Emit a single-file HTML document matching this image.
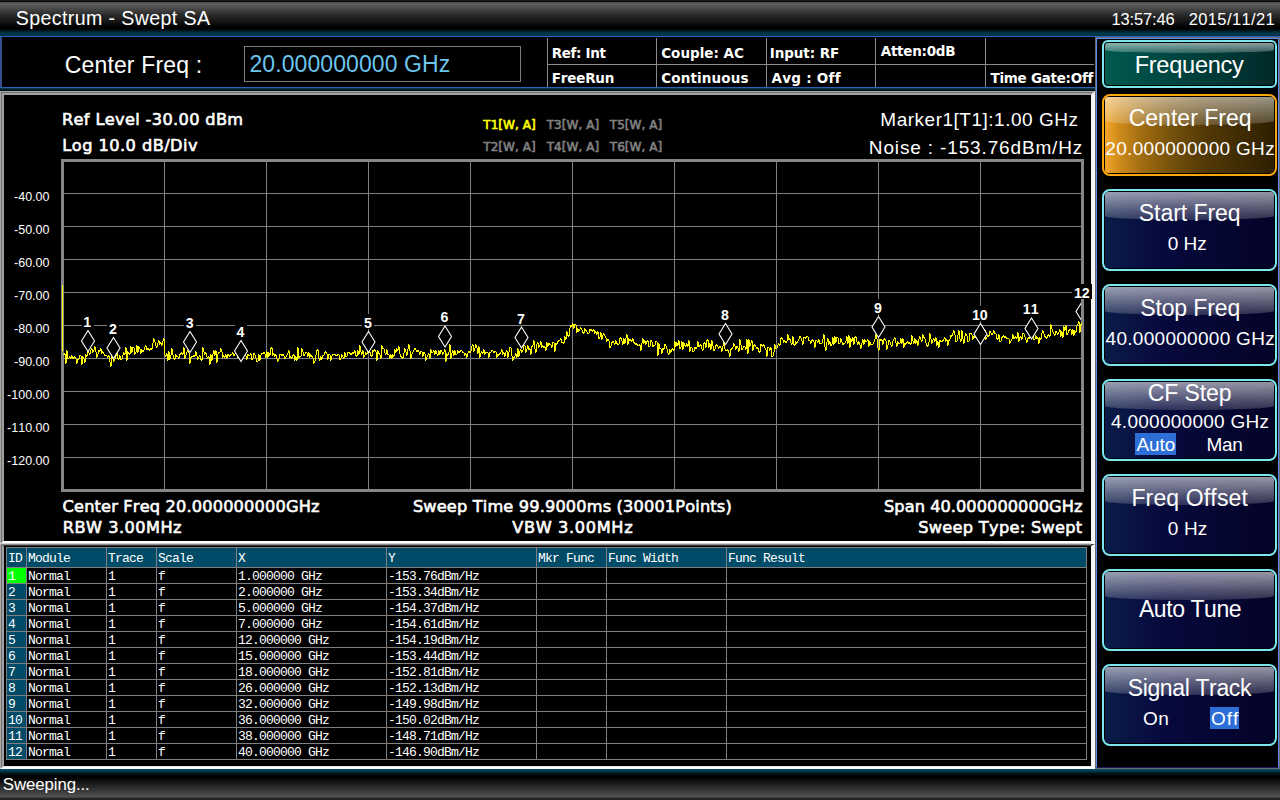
<!DOCTYPE html>
<html lang="en"><head><meta charset="utf-8"><title>Spectrum - Swept SA</title>
<style>
html,body{margin:0;padding:0;background:#000;}
body{width:1280px;height:800px;position:relative;overflow:hidden;font-family:"Liberation Sans",sans-serif;color:#fff;}
.abs,.t{position:absolute;}
.t{white-space:pre;line-height:0;font-weight:400;font-kerning:none;font-variant-ligatures:none;color:#fff;}
.fls,.flsb{font-family:"Liberation Sans",sans-serif;}
.fdv,.fdvb,.fsb{font-family:"DejaVu Sans",sans-serif;}
.flsb,.fdvb{font-weight:700;}
#titlebar{left:0;top:0;width:1280px;height:36px;background:linear-gradient(#1c1c1c 0,#1c1c1c 1px,#080808 1px,#080808 2px,#484848 2px,#606060 4px,#424242 10px,#2a2a2a 15px,#1a1a1a 20px,#080808 25px,#000 28px,#000 29px,#002a38 32px,#003c4e 34px,#003242 36px);}
#topline{left:0;top:36px;width:1280px;height:1px;background:#2f62c0;}
#info{left:0;top:37px;width:1095px;height:50px;background:#000;border-left:2px solid #34508f;box-sizing:border-box;}
#infoline{left:0;top:87px;width:1095px;height:1px;background:#2a62b8;}
#infoglow{left:0;top:88px;width:1095px;height:3px;background:linear-gradient(#0a3c4e,#04202a 60%,#000);}
#freqbox{left:244px;top:46px;width:277px;height:36px;box-sizing:border-box;border:1px solid #7d7d7d;background:#000;}
.gl{position:absolute;background:#8a8a8a;}
.panel{position:absolute;box-sizing:border-box;background:#000;border-style:solid;border-color:#a0a0a0 #f6f6f6 #fff #a0a0a0;}
.panel i{position:absolute;display:block;}
#side{left:1095px;top:37px;width:185px;height:732px;background:#000;box-sizing:border-box;border:1px solid #6a6a6a;}
#side:before{content:"";position:absolute;left:0;top:0;right:0;bottom:0;border:1px solid #5a8cf2;border-bottom-color:#1a1a58;}
.btn{position:absolute;left:1102px;width:175px;box-sizing:border-box;border:2px solid #7ae6ee;border-radius:8px;background:#000;padding:0;}
.btn .fill{position:absolute;left:1px;top:1px;right:1px;bottom:1px;border-radius:3px;background:linear-gradient(90deg,#0a1c48 0,#06093c 35%,#040328 100%);}
.btn .gloss{position:absolute;left:1px;top:1px;right:1px;height:28px;border-radius:3px 3px 50% 50%/3px 3px 4px 4px;background:linear-gradient(rgba(255,255,255,.58),rgba(255,255,255,.16));}
.btn.teal{border-radius:6px;}
.btn.teal .fill{background:linear-gradient(90deg,#005a4e 0,#004a44 30%,#002a2a 100%);}
.btn.teal .gloss{height:10px;border-radius:3px 3px 50% 50%/3px 3px 3px 3px;background:linear-gradient(rgba(255,255,255,.55),rgba(255,255,255,.2));}
.btn.org{border-color:#fba60c;}
.btn.org .fill{background:linear-gradient(90deg,#f4a628 0,#d08c1c 8%,#a06c10 22%,#74500a 40%,#523806 60%,#2e2000 100%);}
.btn.org .gloss{background:linear-gradient(rgba(255,255,255,.52),rgba(255,255,255,.16));}
.hl{position:absolute;background:#2d6fd6;}
#status{left:0;top:769px;width:1280px;height:31px;background:linear-gradient(#00506c 0,#003a4e 2px,#001a24 4px,#000 7px,#000 8px,#525252 28px,#2a2a2a 29px,#1c1c1c 31px);}
table{border-collapse:collapse;position:absolute;left:6px;top:547px;table-layout:fixed;}
td,th{border:1px solid #808080;padding:2px 0 0 1px;height:13px;font:400 13px/13px "Liberation Mono",monospace;letter-spacing:-0.8px;color:#fff;text-align:left;white-space:pre;overflow:hidden;background:#000;}
th{height:17px;line-height:17px;background:#004b68;}
td.id{background:#004b68;}
td.sel{background:#00ff00;}
</style></head><body>

<div id="titlebar" class="abs"></div><div id="topline" class="abs"></div>
<span class="t fls" style="left:15.71px;top:18.30px;font-size:19.6px;letter-spacing:0.387px;">Spectrum - Swept SA</span>
<span class="t fls" style="left:1111.44px;top:19.30px;font-size:16.5px;letter-spacing:-0.149px;">13:57:46</span>
<span class="t fls" style="left:1188.67px;top:19.30px;font-size:16.5px;letter-spacing:0.395px;">2015/11/21</span>
<div id="info" class="abs"></div><div id="infoline" class="abs"></div><div id="infoglow" class="abs"></div>
<span class="t fls" style="left:64.73px;top:65.30px;font-size:23px;letter-spacing:0.156px;">Center Freq :</span>
<div id="freqbox" class="abs"></div>
<span class="t fls" style="left:249.44px;top:64.30px;font-size:23px;color:#6cc6ee;letter-spacing:0.088px;">20.000000000 GHz</span>
<div class="gl" style="left:547px;top:38px;width:1px;height:49px"></div>
<div class="gl" style="left:656px;top:38px;width:1px;height:49px"></div>
<div class="gl" style="left:766px;top:38px;width:1px;height:49px"></div>
<div class="gl" style="left:875px;top:38px;width:1px;height:49px"></div>
<div class="gl" style="left:985px;top:38px;width:1px;height:49px"></div>
<div class="gl" style="left:547px;top:64px;width:547px;height:1px"></div>
<span class="t fdvb" style="left:551.76px;top:53.30px;font-size:13.5px;letter-spacing:-0.352px;">Ref: Int</span>
<span class="t fdvb" style="left:551.76px;top:78.30px;font-size:13.5px;letter-spacing:-0.202px;">FreeRun</span>
<span class="t fdvb" style="left:661.23px;top:53.30px;font-size:13.5px;letter-spacing:-0.006px;">Couple: AC</span>
<span class="t fdvb" style="left:661.23px;top:78.30px;font-size:13.5px;letter-spacing:0.133px;">Continuous</span>
<span class="t fdvb" style="left:769.66px;top:53.30px;font-size:13.5px;letter-spacing:-0.051px;">Input: RF</span>
<span class="t fdvb" style="left:771.43px;top:78.30px;font-size:13.5px;letter-spacing:0.277px;">Avg : Off</span>
<span class="t fdvb" style="left:880.73px;top:51.30px;font-size:13.5px;letter-spacing:-0.269px;">Atten:0dB</span>
<span class="t fdvb" style="left:990.53px;top:78.30px;font-size:13.5px;letter-spacing:-0.278px;">Time Gate:Off</span>
<div class="panel" id="chartpanel" style="left:0;top:91px;width:1095px;height:453px;border-width:4px 4px 3px 4px"><i style="left:-4px;top:-4px;width:1093px;height:1px;background:#a8a8a8"></i><i style="left:-3px;top:-3px;width:1091px;height:1px;background:#707070"></i><i style="left:-4px;top:-4px;width:1px;height:452px;background:#a8a8a8"></i><i style="left:-3px;top:-3px;width:1px;height:450px;background:#707070"></i><i style="left:-4px;bottom:-3px;width:1091px;height:1px;background:#d0d0d0"></i></div>
<div class="panel" id="tablepanel" style="left:0;top:544px;width:1095px;height:225px;border-width:2px 4px 3px 4px;border-top-color:#3a3a3a"><i style="left:-4px;top:-2px;width:1091px;height:1px;background:#8a8a8a"></i><i style="left:-4px;top:-2px;width:1px;height:224px;background:#a8a8a8"></i><i style="left:-3px;top:-1px;width:1px;height:222px;background:#707070"></i><i style="left:0;bottom:-1px;width:1087px;height:1px;background:#e8e8e8"></i></div>
<svg class="abs" style="left:0;top:0" width="1095" height="545" viewBox="0 0 1095 545" shape-rendering="crispEdges"><defs><clipPath id="plotclip"><rect x="64" y="162" width="1017" height="327"/></clipPath></defs><rect x="62.5" y="160.5" width="1020" height="330" fill="none" stroke="#868686" stroke-width="3"/><line x1="164.5" y1="162" x2="164.5" y2="489" stroke="#808080" stroke-width="1"/><line x1="64" y1="193.5" x2="1081" y2="193.5" stroke="#808080" stroke-width="1"/><line x1="266.5" y1="162" x2="266.5" y2="489" stroke="#808080" stroke-width="1"/><line x1="64" y1="226.5" x2="1081" y2="226.5" stroke="#808080" stroke-width="1"/><line x1="368.5" y1="162" x2="368.5" y2="489" stroke="#808080" stroke-width="1"/><line x1="64" y1="259.5" x2="1081" y2="259.5" stroke="#808080" stroke-width="1"/><line x1="470.5" y1="162" x2="470.5" y2="489" stroke="#808080" stroke-width="1"/><line x1="64" y1="292.5" x2="1081" y2="292.5" stroke="#808080" stroke-width="1"/><line x1="572.5" y1="162" x2="572.5" y2="489" stroke="#808080" stroke-width="1"/><line x1="64" y1="325.5" x2="1081" y2="325.5" stroke="#808080" stroke-width="1"/><line x1="674.5" y1="162" x2="674.5" y2="489" stroke="#808080" stroke-width="1"/><line x1="64" y1="358.5" x2="1081" y2="358.5" stroke="#808080" stroke-width="1"/><line x1="776.5" y1="162" x2="776.5" y2="489" stroke="#808080" stroke-width="1"/><line x1="64" y1="391.5" x2="1081" y2="391.5" stroke="#808080" stroke-width="1"/><line x1="878.5" y1="162" x2="878.5" y2="489" stroke="#808080" stroke-width="1"/><line x1="64" y1="424.5" x2="1081" y2="424.5" stroke="#808080" stroke-width="1"/><line x1="980.5" y1="162" x2="980.5" y2="489" stroke="#808080" stroke-width="1"/><line x1="64" y1="457.5" x2="1081" y2="457.5" stroke="#808080" stroke-width="1"/><path d="M62.5 285v66M63.5 354v1M64.5 353v2M65.5 354v10M66.5 350v13M67.5 351v8M68.5 358v1M69.5 356v2M70.5 357v2M71.5 355v3M72.5 356v3M73.5 357v2M74.5 356v2M75.5 357v2M76.5 359v5M77.5 359v4M78.5 359v1M79.5 355v4M80.5 355v1M81.5 356v9M82.5 356v8M83.5 357v2M84.5 359v4M85.5 354v8M86.5 355v2M87.5 351v5M88.5 351v2M89.5 353v2M90.5 350v4M91.5 348v2M92.5 349v4M93.5 350v2M94.5 346v4M95.5 347v5M96.5 352v6M97.5 354v3M98.5 350v4M99.5 350v2M100.5 348v3M101.5 349v5M102.5 351v2M103.5 352v2M104.5 354v2M105.5 355v1M106.5 355v1M107.5 356v2M108.5 355v2M109.5 356v6M110.5 362v5M111.5 355v11M112.5 356v3M113.5 359v3M114.5 359v2M115.5 356v3M116.5 349v7M117.5 350v9M118.5 358v2M119.5 355v4M120.5 356v4M121.5 359v1M122.5 355v4M123.5 352v3M124.5 353v2M125.5 347v7M126.5 348v13M127.5 351v9M128.5 352v2M129.5 353v2M130.5 346v8M131.5 347v6M132.5 347v5M133.5 347v1M134.5 348v7M135.5 352v2M136.5 345v7M137.5 346v7M138.5 346v6M139.5 347v2M140.5 349v5M141.5 349v4M142.5 350v2M143.5 350v2M144.5 347v3M145.5 345v2M146.5 346v4M147.5 348v2M148.5 348v2M149.5 349v2M150.5 348v2M151.5 348v2M152.5 343v6M153.5 338v5M154.5 339v3M155.5 342v4M156.5 346v2M157.5 343v4M158.5 340v3M159.5 341v4M160.5 342v2M161.5 343v3M162.5 341v4M163.5 338v3M164.5 339v16M165.5 355v2M166.5 353v3M167.5 354v7M168.5 351v9M169.5 352v8M170.5 355v4M171.5 348v7M172.5 349v6M173.5 355v4M174.5 358v2M175.5 354v5M176.5 355v2M177.5 356v1M178.5 357v2M179.5 354v4M180.5 353v2M181.5 352v2M182.5 353v2M183.5 347v7M184.5 348v11M185.5 355v3M186.5 352v3M187.5 350v2M188.5 351v2M189.5 353v11M190.5 357v6M191.5 356v2M192.5 356v1M193.5 355v2M194.5 355v2M195.5 351v5M196.5 352v4M197.5 356v4M198.5 357v2M199.5 355v2M200.5 356v4M201.5 359v2M202.5 347v13M203.5 348v4M204.5 352v3M205.5 352v2M206.5 353v4M207.5 357v2M208.5 356v2M209.5 357v8M210.5 354v10M211.5 355v6M212.5 354v6M213.5 350v4M214.5 351v5M215.5 350v5M216.5 351v12M217.5 354v8M218.5 352v2M219.5 352v1M220.5 348v4M221.5 349v3M222.5 352v6M223.5 355v2M224.5 356v2M225.5 354v3M226.5 355v4M227.5 354v4M228.5 354v2M229.5 355v2M230.5 354v2M231.5 354v1M232.5 352v2M233.5 353v3M234.5 354v2M235.5 352v2M236.5 350v2M237.5 351v7M238.5 354v3M239.5 352v2M240.5 352v2M241.5 354v7M242.5 357v3M243.5 348v9M244.5 349v6M245.5 354v2M246.5 356v4M247.5 354v5M248.5 354v2M249.5 355v1M250.5 353v2M251.5 354v6M252.5 358v2M253.5 353v5M254.5 353v2M255.5 355v3M256.5 358v4M257.5 361v1M258.5 354v7M259.5 355v6M260.5 355v5M261.5 353v2M262.5 353v1M263.5 352v2M264.5 352v2M265.5 354v4M266.5 351v6M267.5 352v6M268.5 352v5M269.5 353v3M270.5 348v7M271.5 347v2M272.5 348v8M273.5 353v2M274.5 354v3M275.5 354v2M276.5 355v4M277.5 359v3M278.5 359v2M279.5 354v5M280.5 354v1M281.5 354v2M282.5 354v2M283.5 354v2M284.5 356v3M285.5 357v2M286.5 355v2M287.5 353v2M288.5 350v3M289.5 351v7M290.5 356v2M291.5 357v2M292.5 355v3M293.5 354v2M294.5 355v6M295.5 356v4M296.5 357v4M297.5 347v13M298.5 348v10M299.5 356v2M300.5 356v1M301.5 348v8M302.5 349v3M303.5 352v4M304.5 354v2M305.5 352v2M306.5 352v1M307.5 353v4M308.5 352v4M309.5 353v5M310.5 354v3M311.5 355v2M312.5 356v2M313.5 358v6M314.5 361v2M315.5 355v6M316.5 350v5M317.5 349v2M318.5 350v8M319.5 358v3M320.5 356v4M321.5 357v3M322.5 355v4M323.5 355v1M324.5 352v3M325.5 351v2M326.5 352v2M327.5 354v6M328.5 354v5M329.5 354v1M330.5 355v6M331.5 356v4M332.5 354v2M333.5 354v1M334.5 354v1M335.5 354v2M336.5 355v1M337.5 354v2M338.5 354v1M339.5 355v5M340.5 358v2M341.5 354v4M342.5 355v2M343.5 357v2M344.5 352v6M345.5 353v4M346.5 356v1M347.5 352v4M348.5 352v1M349.5 352v2M350.5 353v2M351.5 353v2M352.5 352v2M353.5 352v2M354.5 350v3M355.5 351v5M356.5 355v2M357.5 350v6M358.5 351v4M359.5 345v9M360.5 346v6M361.5 352v3M362.5 350v4M363.5 351v7M364.5 355v2M365.5 352v3M366.5 353v2M367.5 350v4M368.5 351v2M369.5 351v2M370.5 352v4M371.5 355v2M372.5 350v6M373.5 350v2M374.5 349v2M375.5 350v2M376.5 352v9M377.5 350v10M378.5 351v3M379.5 353v2M380.5 355v4M381.5 345v13M382.5 346v3M383.5 348v1M384.5 349v4M385.5 353v2M386.5 349v5M387.5 350v5M388.5 354v1M389.5 355v4M390.5 354v4M391.5 355v4M392.5 354v4M393.5 355v2M394.5 349v7M395.5 350v3M396.5 348v4M397.5 349v2M398.5 346v4M399.5 347v7M400.5 354v3M401.5 356v2M402.5 357v2M403.5 353v5M404.5 348v5M405.5 349v3M406.5 352v4M407.5 349v6M408.5 344v5M409.5 345v6M410.5 351v8M411.5 354v4M412.5 352v2M413.5 350v2M414.5 348v2M415.5 348v2M416.5 350v2M417.5 350v2M418.5 350v2M419.5 352v3M420.5 351v3M421.5 351v1M422.5 352v5M423.5 352v4M424.5 352v2M425.5 354v7M426.5 357v3M427.5 355v2M428.5 353v2M429.5 354v5M430.5 349v9M431.5 350v3M432.5 352v1M433.5 350v2M434.5 351v4M435.5 350v4M436.5 351v3M437.5 354v2M438.5 350v5M439.5 351v4M440.5 350v4M441.5 350v2M442.5 352v3M443.5 352v2M444.5 349v3M445.5 350v12M446.5 353v8M447.5 354v2M448.5 352v3M449.5 344v8M450.5 345v14M451.5 353v5M452.5 350v3M453.5 351v5M454.5 350v5M455.5 351v4M456.5 354v1M457.5 350v4M458.5 351v2M459.5 351v2M460.5 350v2M461.5 350v1M462.5 351v2M463.5 352v1M464.5 353v3M465.5 353v2M466.5 354v4M467.5 353v4M468.5 351v2M469.5 351v2M470.5 351v2M471.5 346v5M472.5 344v2M473.5 345v7M474.5 348v3M475.5 344v4M476.5 345v3M477.5 348v6M478.5 346v7M479.5 347v11M480.5 353v4M481.5 351v2M482.5 352v2M483.5 349v4M484.5 350v5M485.5 352v2M486.5 352v1M487.5 352v1M488.5 353v5M489.5 352v5M490.5 352v1M491.5 350v2M492.5 350v1M493.5 351v2M494.5 351v2M495.5 351v1M496.5 352v6M497.5 354v3M498.5 354v2M499.5 353v2M500.5 352v2M501.5 349v3M502.5 350v5M503.5 352v2M504.5 353v4M505.5 352v4M506.5 350v2M507.5 351v7M508.5 352v5M509.5 347v5M510.5 347v1M511.5 348v8M512.5 356v5M513.5 357v3M514.5 356v2M515.5 353v3M516.5 354v4M517.5 348v9M518.5 349v8M519.5 351v5M520.5 349v2M521.5 350v3M522.5 350v2M523.5 345v5M524.5 345v1M525.5 346v7M526.5 349v3M527.5 345v4M528.5 346v4M529.5 348v2M530.5 349v6M531.5 346v8M532.5 345v2M533.5 340v5M534.5 341v8M535.5 349v4M536.5 344v8M537.5 342v2M538.5 343v5M539.5 345v2M540.5 341v4M541.5 342v6M542.5 345v2M543.5 346v2M544.5 346v2M545.5 347v4M546.5 342v8M547.5 343v4M548.5 343v3M549.5 343v2M550.5 344v1M551.5 345v3M552.5 342v5M553.5 342v1M554.5 343v9M555.5 343v8M556.5 343v2M557.5 341v3M558.5 340v2M559.5 340v1M560.5 338v2M561.5 339v4M562.5 342v1M563.5 342v2M564.5 336v7M565.5 337v3M566.5 331v8M567.5 332v4M568.5 335v2M569.5 328v8M570.5 325v3M571.5 325v2M572.5 323v3M573.5 324v5M574.5 324v4M575.5 324v1M576.5 325v8M577.5 328v4M578.5 329v3M579.5 329v2M580.5 327v2M581.5 328v2M582.5 330v3M583.5 332v2M584.5 328v5M585.5 329v2M586.5 330v2M587.5 332v2M588.5 333v1M589.5 329v4M590.5 329v2M591.5 329v2M592.5 330v2M593.5 329v2M594.5 330v4M595.5 331v2M596.5 332v3M597.5 331v3M598.5 332v7M599.5 337v2M600.5 332v5M601.5 333v7M602.5 335v4M603.5 333v2M604.5 334v2M605.5 336v2M606.5 338v4M607.5 339v2M608.5 339v2M609.5 341v7M610.5 346v2M611.5 342v4M612.5 341v2M613.5 341v2M614.5 343v2M615.5 340v4M616.5 341v3M617.5 343v2M618.5 344v1M619.5 338v6M620.5 337v2M621.5 338v3M622.5 341v4M623.5 338v6M624.5 339v5M625.5 338v5M626.5 334v4M627.5 335v10M628.5 338v6M629.5 339v2M630.5 339v2M631.5 340v2M632.5 338v3M633.5 339v4M634.5 342v2M635.5 343v2M636.5 343v2M637.5 344v2M638.5 345v1M639.5 344v2M640.5 345v6M641.5 343v7M642.5 338v5M643.5 339v5M644.5 340v3M645.5 341v4M646.5 341v3M647.5 340v2M648.5 341v6M649.5 346v1M650.5 340v6M651.5 340v2M652.5 342v5M653.5 345v2M654.5 345v1M655.5 341v4M656.5 341v1M657.5 342v14M658.5 343v12M659.5 344v5M660.5 348v1M661.5 349v5M662.5 348v5M663.5 348v2M664.5 344v5M665.5 344v2M666.5 346v3M667.5 349v4M668.5 353v2M669.5 349v5M670.5 350v3M671.5 349v3M672.5 348v2M673.5 349v2M674.5 341v9M675.5 342v5M676.5 342v4M677.5 343v3M678.5 340v5M679.5 341v8M680.5 347v2M681.5 341v6M682.5 342v8M683.5 342v7M684.5 343v3M685.5 345v2M686.5 343v3M687.5 344v3M688.5 340v6M689.5 341v11M690.5 347v4M691.5 347v1M692.5 348v4M693.5 351v1M694.5 347v4M695.5 347v2M696.5 347v2M697.5 341v6M698.5 342v5M699.5 345v2M700.5 344v2M701.5 345v4M702.5 349v2M703.5 343v7M704.5 342v2M705.5 343v5M706.5 340v7M707.5 339v2M708.5 340v8M709.5 343v4M710.5 344v6M711.5 340v9M712.5 341v5M713.5 346v5M714.5 349v2M715.5 345v4M716.5 344v2M717.5 345v2M718.5 347v2M719.5 346v2M720.5 346v2M721.5 348v4M722.5 346v5M723.5 340v6M724.5 341v8M725.5 349v2M726.5 350v1M727.5 349v2M728.5 350v3M729.5 353v4M730.5 349v7M731.5 348v2M732.5 347v2M733.5 343v4M734.5 344v2M735.5 346v4M736.5 346v3M737.5 346v2M738.5 348v4M739.5 339v12M740.5 340v5M741.5 345v5M742.5 348v2M743.5 346v2M744.5 346v1M745.5 347v3M746.5 339v10M747.5 340v14M748.5 339v14M749.5 340v7M750.5 343v3M751.5 340v3M752.5 341v10M753.5 345v5M754.5 344v2M755.5 345v2M756.5 347v2M757.5 347v2M758.5 348v4M759.5 351v2M760.5 344v8M761.5 344v2M762.5 345v2M763.5 344v2M764.5 345v3M765.5 348v2M766.5 350v7M767.5 347v9M768.5 347v1M769.5 348v3M770.5 347v3M771.5 348v9M772.5 356v1M773.5 352v4M774.5 344v8M775.5 345v4M776.5 348v1M777.5 345v3M778.5 343v2M779.5 344v2M780.5 338v7M781.5 337v2M782.5 338v2M783.5 340v3M784.5 340v2M785.5 341v2M786.5 341v2M787.5 334v7M788.5 335v5M789.5 338v2M790.5 339v4M791.5 343v2M792.5 336v8M793.5 337v8M794.5 344v2M795.5 341v4M796.5 342v2M797.5 341v2M798.5 339v2M799.5 336v3M800.5 336v2M801.5 338v3M802.5 341v4M803.5 337v7M804.5 337v1M805.5 337v2M806.5 336v2M807.5 336v1M808.5 337v4M809.5 340v1M810.5 341v3M811.5 340v3M812.5 339v2M813.5 340v2M814.5 342v6M815.5 340v7M816.5 340v1M817.5 341v2M818.5 339v3M819.5 340v4M820.5 343v1M821.5 343v1M822.5 339v4M823.5 334v5M824.5 335v12M825.5 347v4M826.5 342v8M827.5 338v4M828.5 339v6M829.5 341v3M830.5 342v4M831.5 344v2M832.5 337v7M833.5 338v7M834.5 336v8M835.5 337v6M836.5 337v5M837.5 337v1M838.5 338v6M839.5 343v1M840.5 338v5M841.5 339v3M842.5 342v3M843.5 343v2M844.5 343v1M845.5 341v2M846.5 336v5M847.5 337v7M848.5 335v8M849.5 336v12M850.5 338v9M851.5 339v3M852.5 337v4M853.5 338v7M854.5 337v7M855.5 336v2M856.5 337v5M857.5 342v3M858.5 341v3M859.5 342v3M860.5 345v4M861.5 343v5M862.5 339v4M863.5 340v5M864.5 339v5M865.5 340v2M866.5 341v1M867.5 339v2M868.5 340v7M869.5 341v5M870.5 342v3M871.5 344v1M872.5 344v1M873.5 342v2M874.5 339v3M875.5 334v5M876.5 335v4M877.5 339v9M878.5 348v3M879.5 339v11M880.5 339v2M881.5 339v2M882.5 340v5M883.5 339v5M884.5 338v2M885.5 339v2M886.5 341v9M887.5 345v4M888.5 340v5M889.5 340v2M890.5 342v3M891.5 345v2M892.5 341v5M893.5 339v2M894.5 337v2M895.5 338v5M896.5 343v4M897.5 341v5M898.5 342v2M899.5 343v1M900.5 338v5M901.5 339v5M902.5 338v5M903.5 339v9M904.5 343v4M905.5 343v2M906.5 342v2M907.5 341v2M908.5 342v2M909.5 342v2M910.5 343v2M911.5 335v9M912.5 336v5M913.5 341v3M914.5 338v5M915.5 339v5M916.5 340v3M917.5 341v5M918.5 339v6M919.5 336v3M920.5 337v3M921.5 340v2M922.5 334v7M923.5 335v3M924.5 337v2M925.5 339v4M926.5 343v3M927.5 345v2M928.5 342v4M929.5 333v9M930.5 334v5M931.5 339v5M932.5 340v3M933.5 338v2M934.5 339v3M935.5 337v4M936.5 338v8M937.5 341v4M938.5 342v6M939.5 340v7M940.5 340v2M941.5 341v1M942.5 340v2M943.5 339v2M944.5 337v2M945.5 338v4M946.5 339v2M947.5 340v6M948.5 340v5M949.5 339v2M950.5 335v4M951.5 335v2M952.5 333v3M953.5 330v3M954.5 331v4M955.5 335v7M956.5 341v1M957.5 335v6M958.5 330v5M959.5 331v8M960.5 339v3M961.5 330v11M962.5 331v8M963.5 339v5M964.5 336v7M965.5 333v3M966.5 334v2M967.5 336v6M968.5 341v1M969.5 333v8M970.5 333v1M971.5 333v2M972.5 335v5M973.5 336v3M974.5 336v2M975.5 337v1M976.5 333v4M977.5 334v5M978.5 338v2M979.5 340v3M980.5 342v1M981.5 337v5M982.5 337v2M983.5 335v3M984.5 329v6M985.5 330v10M986.5 337v2M987.5 335v2M988.5 335v2M989.5 331v5M990.5 331v2M991.5 333v2M992.5 333v2M993.5 330v3M994.5 331v3M995.5 333v1M996.5 334v5M997.5 338v2M998.5 334v5M999.5 335v7M1000.5 341v1M1001.5 337v4M1002.5 336v2M1003.5 335v2M1004.5 336v2M1005.5 336v2M1006.5 337v2M1007.5 338v1M1008.5 338v1M1009.5 339v5M1010.5 341v2M1011.5 339v2M1012.5 334v5M1013.5 335v4M1014.5 337v2M1015.5 336v2M1016.5 337v2M1017.5 332v6M1018.5 333v9M1019.5 337v4M1020.5 336v2M1021.5 337v3M1022.5 333v6M1023.5 333v1M1024.5 334v3M1025.5 337v3M1026.5 340v3M1027.5 338v4M1028.5 337v2M1029.5 337v2M1030.5 333v5M1031.5 333v1M1032.5 331v2M1033.5 332v8M1034.5 339v1M1035.5 335v4M1036.5 336v3M1037.5 337v2M1038.5 338v6M1039.5 337v6M1040.5 338v2M1041.5 333v6M1042.5 330v3M1043.5 331v3M1044.5 334v3M1045.5 336v2M1046.5 337v2M1047.5 335v3M1048.5 334v2M1049.5 335v2M1050.5 324v12M1051.5 325v4M1052.5 329v3M1053.5 332v2M1054.5 334v2M1055.5 331v4M1056.5 331v2M1057.5 333v2M1058.5 332v2M1059.5 329v3M1060.5 330v7M1061.5 331v5M1062.5 332v6M1063.5 326v11M1064.5 327v4M1065.5 325v5M1066.5 326v9M1067.5 333v2M1068.5 330v3M1069.5 329v2M1070.5 329v1M1071.5 330v5M1072.5 329v5M1073.5 330v6M1074.5 330v5M1075.5 331v2M1076.5 326v6M1077.5 324v2M1078.5 321v3M1079.5 322v11M1080.5 324v8M1081.5 323v2" fill="none" stroke="#ffff00" stroke-width="1"/><rect x="81.5" y="313" width="12" height="15" fill="#000"/><polygon points="88.0,330.5 94.5,341.0 88.0,351.5 81.5,341.0" fill="#000" stroke="#fff" stroke-width="1.1" shape-rendering="geometricPrecision" clip-path="url(#plotclip)"/><rect x="107.0" y="320" width="12" height="15" fill="#000"/><polygon points="113.5,337.5 120.0,348.0 113.5,358.5 107.0,348.0" fill="#000" stroke="#fff" stroke-width="1.1" shape-rendering="geometricPrecision" clip-path="url(#plotclip)"/><rect x="183.5" y="314" width="12" height="15" fill="#000"/><polygon points="190.0,331.5 196.5,342.0 190.0,352.5 183.5,342.0" fill="#000" stroke="#fff" stroke-width="1.1" shape-rendering="geometricPrecision" clip-path="url(#plotclip)"/><rect x="234.5" y="323" width="12" height="15" fill="#000"/><polygon points="241.0,340.5 247.5,351.0 241.0,361.5 234.5,351.0" fill="#000" stroke="#fff" stroke-width="1.1" shape-rendering="geometricPrecision" clip-path="url(#plotclip)"/><rect x="362.0" y="314" width="12" height="15" fill="#000"/><polygon points="368.5,331.5 375.0,342.0 368.5,352.5 362.0,342.0" fill="#000" stroke="#fff" stroke-width="1.1" shape-rendering="geometricPrecision" clip-path="url(#plotclip)"/><rect x="438.5" y="308.5" width="12" height="15" fill="#000"/><polygon points="445.0,326.0 451.5,336.5 445.0,347.0 438.5,336.5" fill="#000" stroke="#fff" stroke-width="1.1" shape-rendering="geometricPrecision" clip-path="url(#plotclip)"/><rect x="515.0" y="309.5" width="12" height="15" fill="#000"/><polygon points="521.5,327.0 528.0,337.5 521.5,348.0 515.0,337.5" fill="#000" stroke="#fff" stroke-width="1.1" shape-rendering="geometricPrecision" clip-path="url(#plotclip)"/><rect x="719.0" y="306" width="12" height="15" fill="#000"/><polygon points="725.5,323.5 732.0,334.0 725.5,344.5 719.0,334.0" fill="#000" stroke="#fff" stroke-width="1.1" shape-rendering="geometricPrecision" clip-path="url(#plotclip)"/><rect x="872.0" y="299" width="12" height="15" fill="#000"/><polygon points="878.5,316.5 885.0,327.0 878.5,337.5 872.0,327.0" fill="#000" stroke="#fff" stroke-width="1.1" shape-rendering="geometricPrecision" clip-path="url(#plotclip)"/><rect x="970.0" y="306" width="20" height="15" fill="#000"/><polygon points="980.5,323.5 987.0,334.0 980.5,344.5 974.0,334.0" fill="#000" stroke="#fff" stroke-width="1.1" shape-rendering="geometricPrecision" clip-path="url(#plotclip)"/><rect x="1021.0" y="300.5" width="20" height="15" fill="#000"/><polygon points="1031.5,318.0 1038.0,328.5 1031.5,339.0 1025.0,328.5" fill="#000" stroke="#fff" stroke-width="1.1" shape-rendering="geometricPrecision" clip-path="url(#plotclip)"/><rect x="1072.0" y="283.5" width="20" height="15" fill="#000"/><polygon points="1082.5,301.0 1089.0,311.5 1082.5,322.0 1076.0,311.5" fill="#000" stroke="#fff" stroke-width="1.1" shape-rendering="geometricPrecision" clip-path="url(#plotclip)"/></svg>
<span class="t flsb" style="left:83.30px;top:322.30px;font-size:14.2px;">1</span>
<span class="t flsb" style="left:109.09px;top:329.30px;font-size:14.2px;">2</span>
<span class="t flsb" style="left:185.64px;top:323.30px;font-size:14.2px;">3</span>
<span class="t flsb" style="left:236.48px;top:332.30px;font-size:14.2px;">4</span>
<span class="t flsb" style="left:364.03px;top:323.30px;font-size:14.2px;">5</span>
<span class="t flsb" style="left:440.55px;top:317.30px;font-size:14.2px;">6</span>
<span class="t flsb" style="left:517.06px;top:319.30px;font-size:14.2px;">7</span>
<span class="t flsb" style="left:721.04px;top:315.30px;font-size:14.2px;">8</span>
<span class="t flsb" style="left:874.07px;top:308.30px;font-size:14.2px;">9</span>
<span class="t flsb" style="left:971.95px;top:315.30px;font-size:14.2px;">10</span>
<span class="t flsb" style="left:1022.85px;top:309.30px;font-size:14.2px;">11</span>
<span class="t flsb" style="left:1073.94px;top:293.30px;font-size:14.2px;">12</span>
<span class="t fsb" style="left:61.97px;top:119.80px;font-size:16.2px;letter-spacing:0.341px;-webkit-text-stroke:0.62px #fff;">Ref Level -30.00 dBm</span>
<span class="t fsb" style="left:62.32px;top:145.80px;font-size:16.2px;letter-spacing:0.453px;-webkit-text-stroke:0.62px #fff;">Log 10.0 dB/Div</span>
<span class="t fsb" style="left:483.25px;top:125.30px;font-size:12px;color:#ffff00;letter-spacing:0.064px;-webkit-text-stroke:0.62px #ffff00;">T1[W, A]</span>
<span class="t fsb" style="left:546.65px;top:125.30px;font-size:12px;color:#808080;letter-spacing:0.064px;-webkit-text-stroke:0.62px #808080;">T3[W, A]</span>
<span class="t fsb" style="left:609.75px;top:125.30px;font-size:12px;color:#808080;letter-spacing:0.064px;-webkit-text-stroke:0.62px #808080;">T5[W, A]</span>
<span class="t fsb" style="left:483.25px;top:147.30px;font-size:12px;color:#808080;letter-spacing:0.064px;-webkit-text-stroke:0.62px #808080;">T2[W, A]</span>
<span class="t fsb" style="left:546.65px;top:147.30px;font-size:12px;color:#808080;letter-spacing:0.064px;-webkit-text-stroke:0.62px #808080;">T4[W, A]</span>
<span class="t fsb" style="left:609.75px;top:147.30px;font-size:12px;color:#808080;letter-spacing:0.064px;-webkit-text-stroke:0.62px #808080;">T6[W, A]</span>
<span class="t fls" style="left:880.34px;top:119.80px;font-size:19px;letter-spacing:0.508px;">Marker1[T1]:1.00 GHz</span>
<span class="t fls" style="left:868.84px;top:147.80px;font-size:19px;letter-spacing:0.854px;">Noise : -153.76dBm/Hz</span>
<span class="t fls" style="left:14.05px;top:197.30px;font-size:12.5px;">-40.00</span>
<span class="t fls" style="left:14.05px;top:230.30px;font-size:12.5px;">-50.00</span>
<span class="t fls" style="left:14.05px;top:263.30px;font-size:12.5px;">-60.00</span>
<span class="t fls" style="left:14.05px;top:296.30px;font-size:12.5px;">-70.00</span>
<span class="t fls" style="left:14.05px;top:329.30px;font-size:12.5px;">-80.00</span>
<span class="t fls" style="left:14.05px;top:362.30px;font-size:12.5px;">-90.00</span>
<span class="t fls" style="left:7.09px;top:395.30px;font-size:12.5px;">-100.00</span>
<span class="t fls" style="left:7.09px;top:428.30px;font-size:12.5px;">-110.00</span>
<span class="t fls" style="left:7.09px;top:461.30px;font-size:12.5px;">-120.00</span>
<span class="t fsb" style="left:62.60px;top:506.80px;font-size:16.2px;letter-spacing:0.164px;-webkit-text-stroke:0.62px #fff;">Center Freq 20.000000000GHz</span>
<span class="t fsb" style="left:62.82px;top:527.80px;font-size:16.2px;letter-spacing:0.460px;-webkit-text-stroke:0.62px #fff;">RBW 3.00MHz</span>
<span class="t fsb" style="left:412.94px;top:506.80px;font-size:16.2px;letter-spacing:0.154px;-webkit-text-stroke:0.62px #fff;">Sweep Time 99.9000ms (30001Points)</span>
<span class="t fsb" style="left:512.18px;top:527.80px;font-size:16.2px;letter-spacing:0.651px;-webkit-text-stroke:0.62px #fff;">VBW 3.00MHz</span>
<span class="t fsb" style="left:884.04px;top:506.80px;font-size:16.2px;letter-spacing:0.046px;-webkit-text-stroke:0.62px #fff;">Span 40.000000000GHz</span>
<span class="t fsb" style="left:918.24px;top:527.80px;font-size:16.2px;letter-spacing:0.291px;-webkit-text-stroke:0.62px #fff;">Sweep Type: Swept</span>
<table><colgroup><col style="width:20px"><col style="width:80px"><col style="width:50px"><col style="width:80px"><col style="width:150px"><col style="width:150px"><col style="width:70px"><col style="width:120px"><col style="width:360px"></colgroup>
<tr><th>ID</th><th>Module</th><th>Trace</th><th>Scale</th><th>X</th><th>Y</th><th>Mkr Func</th><th>Func Width</th><th>Func Result</th></tr>
<tr><td class="id sel">1</td><td>Normal</td><td>1</td><td>f</td><td>1.000000 GHz</td><td>-153.76dBm/Hz</td><td></td><td></td><td></td></tr>
<tr><td class="id">2</td><td>Normal</td><td>1</td><td>f</td><td>2.000000 GHz</td><td>-153.34dBm/Hz</td><td></td><td></td><td></td></tr>
<tr><td class="id">3</td><td>Normal</td><td>1</td><td>f</td><td>5.000000 GHz</td><td>-154.37dBm/Hz</td><td></td><td></td><td></td></tr>
<tr><td class="id">4</td><td>Normal</td><td>1</td><td>f</td><td>7.000000 GHz</td><td>-154.61dBm/Hz</td><td></td><td></td><td></td></tr>
<tr><td class="id">5</td><td>Normal</td><td>1</td><td>f</td><td>12.000000 GHz</td><td>-154.19dBm/Hz</td><td></td><td></td><td></td></tr>
<tr><td class="id">6</td><td>Normal</td><td>1</td><td>f</td><td>15.000000 GHz</td><td>-153.44dBm/Hz</td><td></td><td></td><td></td></tr>
<tr><td class="id">7</td><td>Normal</td><td>1</td><td>f</td><td>18.000000 GHz</td><td>-152.81dBm/Hz</td><td></td><td></td><td></td></tr>
<tr><td class="id">8</td><td>Normal</td><td>1</td><td>f</td><td>26.000000 GHz</td><td>-152.13dBm/Hz</td><td></td><td></td><td></td></tr>
<tr><td class="id">9</td><td>Normal</td><td>1</td><td>f</td><td>32.000000 GHz</td><td>-149.98dBm/Hz</td><td></td><td></td><td></td></tr>
<tr><td class="id">10</td><td>Normal</td><td>1</td><td>f</td><td>36.000000 GHz</td><td>-150.02dBm/Hz</td><td></td><td></td><td></td></tr>
<tr><td class="id">11</td><td>Normal</td><td>1</td><td>f</td><td>38.000000 GHz</td><td>-148.71dBm/Hz</td><td></td><td></td><td></td></tr>
<tr><td class="id">12</td><td>Normal</td><td>1</td><td>f</td><td>40.000000 GHz</td><td>-146.90dBm/Hz</td><td></td><td></td><td></td></tr>
</table>
<div id="side" class="abs"></div>
<div class="btn teal" style="top:40px;height:48px"><div class="fill"></div><div class="gloss"></div></div>
<span class="t fls" style="left:1134.66px;top:65.30px;font-size:23.6px;letter-spacing:-0.277px;">Frequency</span>
<div class="btn org" style="top:94px;height:82px"><div class="fill"></div><div class="gloss"></div></div>
<span class="t fls" style="left:1128.63px;top:118.30px;font-size:23px;letter-spacing:0.032px;">Center Freq</span>
<span class="t fls" style="left:1105.34px;top:148.80px;font-size:19px;letter-spacing:0.301px;">20.000000000 GHz</span>
<div class="btn " style="top:189px;height:82px"><div class="fill"></div><div class="gloss"></div></div>
<span class="t fls" style="left:1138.76px;top:213.30px;font-size:23px;letter-spacing:-0.038px;">Start Freq</span>
<span class="t fls" style="left:1167.66px;top:243.80px;font-size:19px;letter-spacing:0.041px;">0 Hz</span>
<div class="btn " style="top:284px;height:82px"><div class="fill"></div><div class="gloss"></div></div>
<span class="t fls" style="left:1140.16px;top:308.30px;font-size:23px;letter-spacing:-0.110px;">Stop Freq</span>
<span class="t fls" style="left:1105.56px;top:338.80px;font-size:19px;letter-spacing:0.289px;">40.000000000 GHz</span>
<div class="btn " style="top:379px;height:82px"><div class="fill"></div><div class="gloss"></div></div>
<span class="t fls" style="left:1147.63px;top:393.30px;font-size:23px;letter-spacing:-0.088px;">CF Step</span>
<span class="t fls" style="left:1111.06px;top:421.80px;font-size:19px;letter-spacing:0.261px;">4.000000000 GHz</span>
<div class="hl" style="left:1135px;top:433px;width:41px;height:22px"></div>
<span class="t fls" style="left:1136.46px;top:444.80px;font-size:19px;letter-spacing:-0.083px;">Auto</span>
<span class="t fls" style="left:1206.44px;top:444.80px;font-size:19px;letter-spacing:-0.334px;">Man</span>
<div class="btn " style="top:474px;height:82px"><div class="fill"></div><div class="gloss"></div></div>
<span class="t fls" style="left:1131.41px;top:498.30px;font-size:23px;letter-spacing:0.142px;">Freq Offset</span>
<span class="t fls" style="left:1167.76px;top:528.80px;font-size:19px;letter-spacing:0.174px;">0 Hz</span>
<div class="btn " style="top:569px;height:82px"><div class="fill"></div><div class="gloss"></div></div>
<span class="t fls" style="left:1138.96px;top:609.30px;font-size:23px;letter-spacing:-0.433px;">Auto Tune</span>
<div class="btn " style="top:664px;height:82px"><div class="fill"></div><div class="gloss"></div></div>
<span class="t fls" style="left:1127.66px;top:688.30px;font-size:23px;letter-spacing:-0.365px;">Signal Track</span>
<div class="hl" style="left:1210px;top:707px;width:29px;height:22px"></div>
<span class="t fls" style="left:1143.00px;top:718.80px;font-size:19px;letter-spacing:0.388px;">On</span>
<span class="t fls" style="left:1211.10px;top:718.80px;font-size:19px;letter-spacing:0.868px;">Off</span>
<div id="status" class="abs"></div>
<span class="t fls" style="left:2.84px;top:784.80px;font-size:16.8px;letter-spacing:-0.079px;">Sweeping...</span>
</body></html>
